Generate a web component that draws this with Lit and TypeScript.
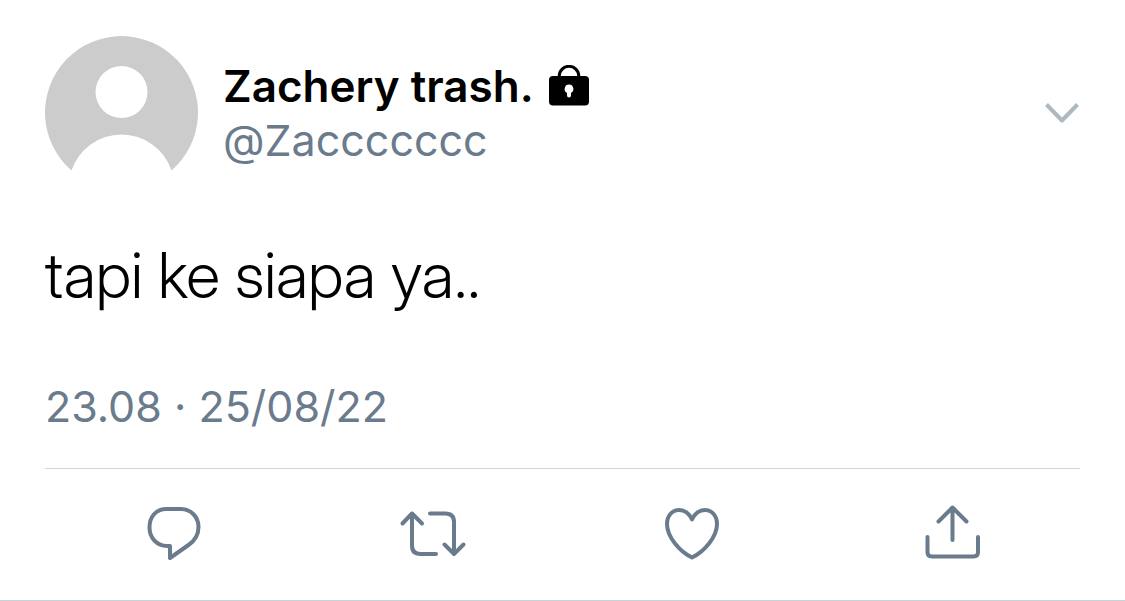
import { LitElement, html, css } from "lit";
import { customElement } from "lit/decorators.js";

@customElement("app-root")
export class AppRoot extends LitElement {
  static styles = css`
    :host {
      display: block;
      background: #fff;
      color: #000;
      font-family: Inter, "Liberation Sans", sans-serif;
      font-variant-ligatures: no-contextual;
    }
    .tweet {
      border-bottom: 1px solid #c6d3da;
      padding: 36px 45px 0;
    }
    .header {
      display: flex;
      align-items: center;
      gap: 25px;
    }
    .avatar {
      flex: none;
      width: 153px;
      height: 153px;
    }
    .author {
      flex: 1;
      min-width: 0;
      font-size: 43px;
      line-height: 54px;
    }
    .name {
      display: flex;
      align-items: center;
      gap: 15px;
      margin: 0;
      font-size: 44px;
      font-weight: 600;
    }
    .lock {
      width: 42px;
      height: 42px;
    }
    .handle {
      display: block;
      color: #697b8c;
      text-decoration: none;
    }
    button {
      display: block;
      border: 0;
      padding: 0;
      background: none;
      color: #697b8c;
      cursor: pointer;
    }
    svg {
      display: block;
    }
    .line {
      fill: none;
      stroke: currentColor;
      stroke-width: 4;
      stroke-linecap: round;
      stroke-linejoin: round;
    }
    .more {
      color: #aeb8c1;
    }
    .chevron {
      width: 36px;
      height: 24px;
    }
    .text {
      margin: 48px 0 66px;
      font-family: "Inter Display", Inter, "Liberation Sans", sans-serif;
      font-size: 63px;
      font-weight: 300;
      line-height: 76px;
    }
    .time {
      display: block;
      padding-bottom: 35px;
      border-bottom: 1px solid #d3d5d7;
      color: #697b8c;
      font-size: 43px;
      line-height: 54px;
    }
    .actions {
      display: grid;
      grid-template-columns: repeat(4, 1fr);
      justify-items: center;
      padding: 21px 0 20px;
    }
    .icon {
      width: 90px;
      height: 90px;
    }
  `;

  render() {
    return html`
      <article class="tweet">
        <header class="header">
          <svg class="avatar" viewBox="0 0 153 153" aria-hidden="true">
            <path
              fill="#ccc"
              d="M26.5 134.5A76.5 76.5 0 1 1 126.5 134.5A52.7 52.7 0 0 0 26.5 134.5Z"
            />
            <circle cx="76.5" cy="56" r="26" fill="#fff" />
          </svg>
          <div class="author">
            <h1 class="name">
              <span>Zachery trash.</span>
              <svg class="lock" viewBox="0 0 42 42" role="img" aria-label="Protected account">
                <path
                  d="M10.3 13V10.800a9.700 9.500 0 0 1 19.400 0V13"
                  fill="none"
                  stroke="#000"
                  stroke-width="3"
                />
                <rect x="0" y="11" width="40" height="29.500" rx="4" />
                <path
                  fill="#fff"
                  d="M20 19.600a4.400 4.400 0 0 1 2 8.300V30.500a2 2 0 0 1-4 0V27.900a4.400 4.400 0 0 1 2-8.300Z"
                />
              </svg>
            </h1>
            <a class="handle" href="#profile">@Zaccccccc</a>
          </div>
          <button class="more" type="button" aria-label="More">
            <svg class="chevron line" viewBox="0 0 36 24">
              <path d="M2.5 3.500L18 19.500L33.5 3.500" stroke-linecap="butt" />
            </svg>
          </button>
        </header>
        <p class="text">tapi ke siapa ya..</p>
        <time class="time" datetime="2022-08-25T23:08">23.08 · 25/08/22</time>
        <div class="actions">
          <button type="button" aria-label="Reply">
            <svg class="icon line" viewBox="-1 0 90 90">
              <path
                d="M36 19H51C61 19 68.5 27 68.5 37C68.5 45 65 50.500 58.500 55L40 68V56H37C27 56 19.500 48 19.500 37.500C19.500 27 26 19 36 19Z"
              />
            </svg>
          </button>
          <button type="button" aria-label="Retweet">
            <svg class="icon line" viewBox="-2 0 90 90">
              <path d="M12.500 33.500L22 23.500L32 33.500M22 23.500V55.500Q22 64 30.500 64H46" />
              <path d="M40 23.500H55.500Q64 23.500 64 32V64M54.500 54.500L64 64L73.500 54.500" />
            </svg>
          </button>
          <button type="button" aria-label="Like">
            <svg class="icon line" viewBox="-3 0 90 90">
              <path
                d="M42 29.500C39 23 34 20 29 20C22 20 17 26 17 34C17 47 30 62 42 67.500C54 62 67 47 67 34C67 26 62 20 55 20C50 20 45 23 42 29.500Z"
              />
            </svg>
          </button>
          <button type="button" aria-label="Share">
            <svg class="icon line" viewBox="-4 0 90 90">
              <path d="M42.500 50V17.500M28.500 31.500L42.500 17.500L56.500 31.500" />
              <path d="M17.500 47V62Q17.500 66.500 22 66.500H63.500Q68 66.500 68 62V47" />
            </svg>
          </button>
        </div>
      </article>
    `;
  }
}
